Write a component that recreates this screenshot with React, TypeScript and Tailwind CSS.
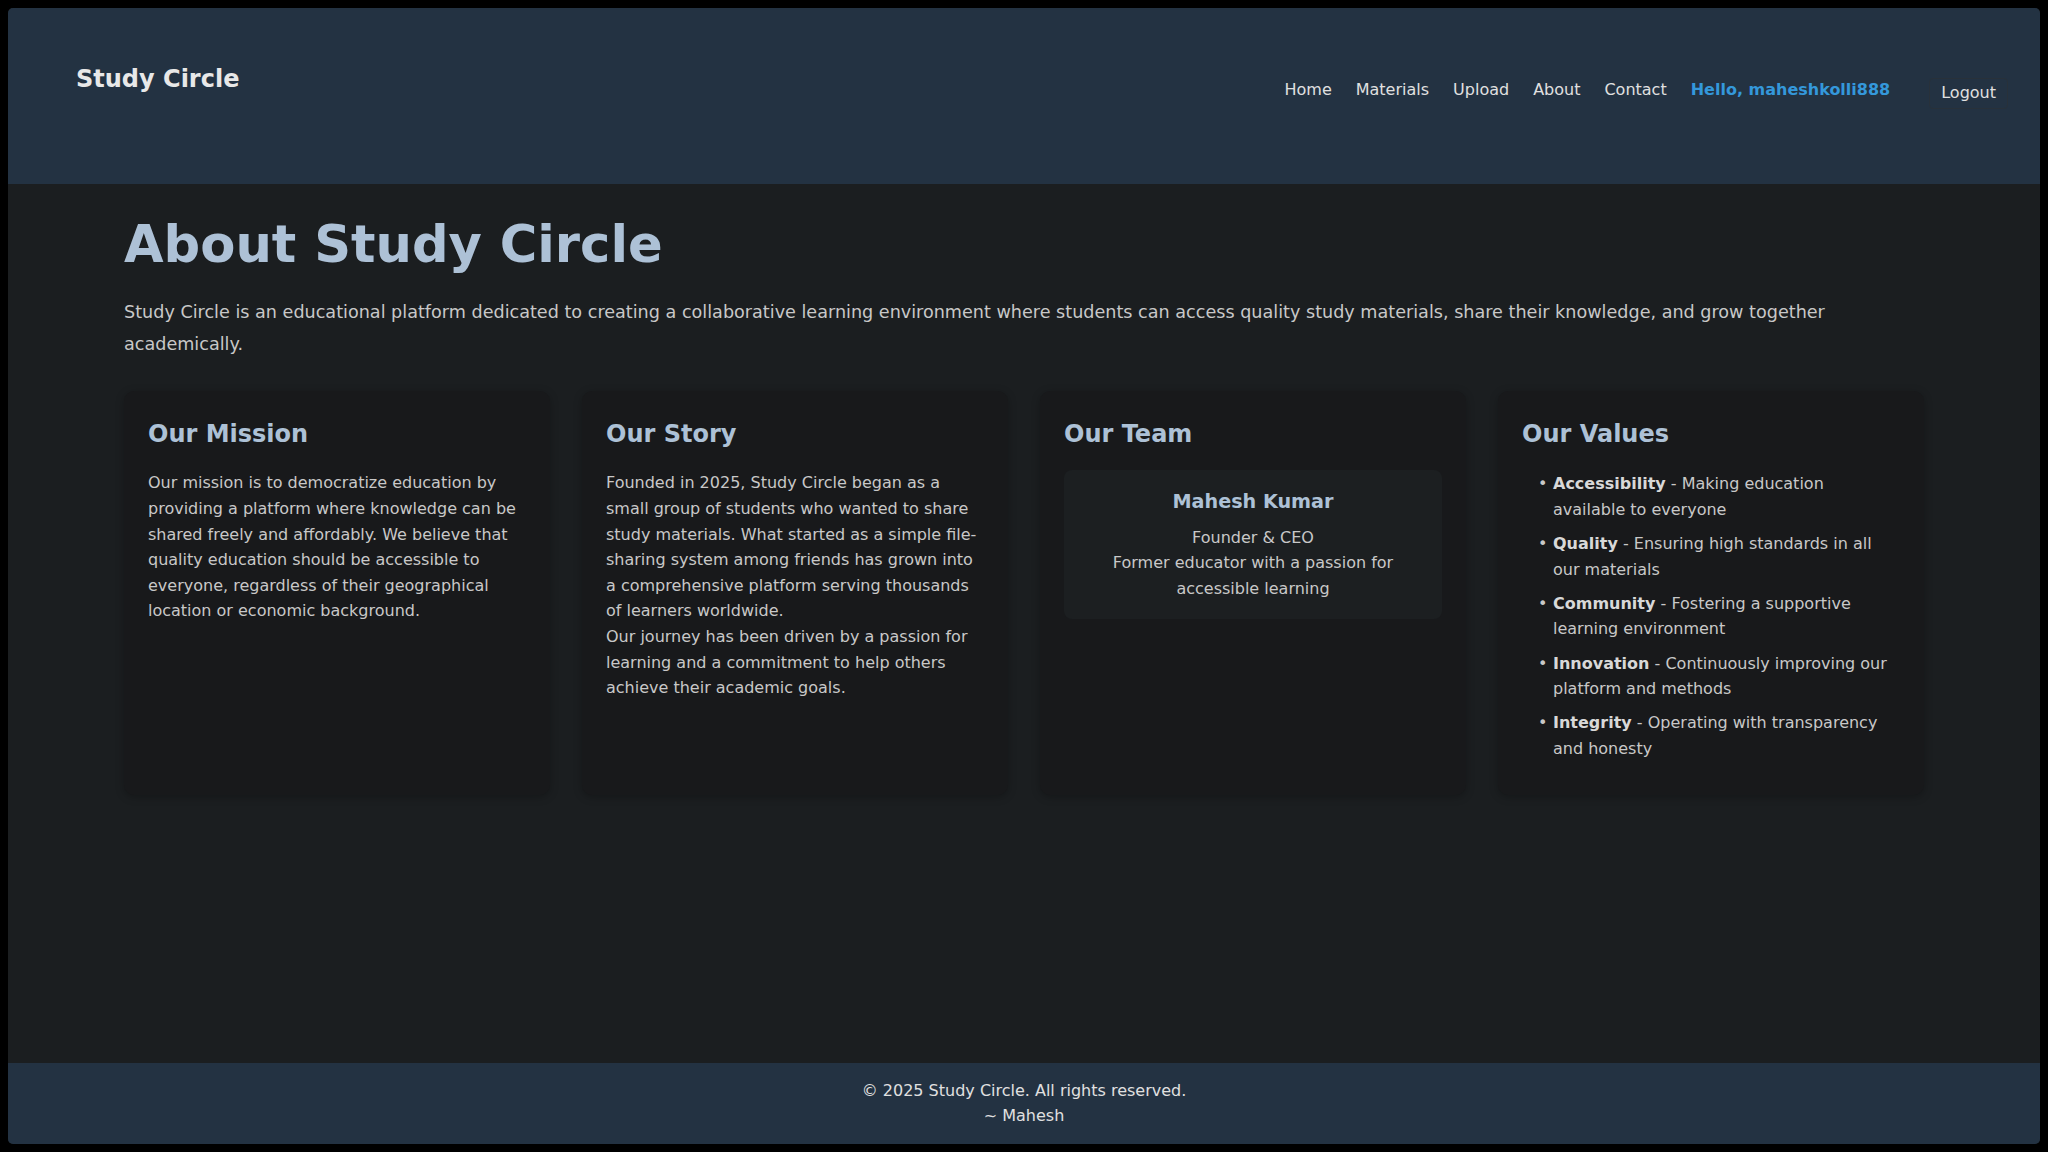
const navLinks = ["Home", "Materials", "Upload", "About", "Contact"]

const values = [
  { name: "Accessibility", text: "Making education available to everyone" },
  { name: "Quality", text: "Ensuring high standards in all our materials" },
  { name: "Community", text: "Fostering a supportive learning environment" },
  { name: "Innovation", text: "Continuously improving our platform and methods" },
  { name: "Integrity", text: "Operating with transparency and honesty" },
]

function Card({ title, children }: { title: string; children: React.ReactNode }) {
  return (
    <div className="bg-[#18191b] rounded-[10px] shadow-[0_2px_8px_rgba(0,0,0,0.25)] pt-[29px] px-6 pb-[25px]">
      <h3 className="text-2xl font-bold leading-[1.2] text-[#adc1d6] mb-[22px]">{title}</h3>
      {children}
    </div>
  )
}

export default function App() {
  return (
    <div className="w-full h-screen bg-black p-2 font-['DejaVu_Sans',sans-serif]">
      <div className="h-full flex flex-col rounded-[5px] overflow-hidden bg-[#1b1e20]">
        <header className="h-[176px] shrink-0 bg-[#233242] flex items-start justify-between pl-[68px] pr-[32px]">
          <h1 className="mt-[58px] text-2xl font-bold leading-[1.164] text-[#e8e8e8]">Study Circle</h1>
          <nav className="mt-[63px] flex items-center">
            <div className="flex items-center gap-[24px] text-base text-[#e0e0e0]">
              {navLinks.map((link) => (
                <a key={link} href="#" className="leading-[1.164]">
                  {link}
                </a>
              ))}
              <span className="font-bold text-[#3498db] leading-[1.164]">Hello, maheshkolli888</span>
            </div>
            <button className="ml-[39px] mt-[7px] px-[11px] py-[5px] border border-[#28313a] rounded-[4px] text-base leading-[1.164] text-[#e0e0e0]">
              Logout
            </button>
          </nav>
        </header>

        <main className="flex-1 pt-[31px]">
          <div className="max-w-[1800px] mx-auto">
            <h2 className="text-[3.2rem] font-bold leading-[1.164] text-[#adc1d6] mb-[21px]">About Study Circle</h2>
            <p className="text-[1.1rem] leading-[1.85] text-[#c8c8c8]">
              Study Circle is an educational platform dedicated to creating a collaborative learning environment where
              students can access quality study materials, share their knowledge, and grow together academically.
            </p>

            <div className="grid grid-cols-4 gap-[32px] mt-[30px]">
              <Card title="Our Mission">
                <p className="text-base leading-[1.6] text-[#c8c8c8]">
                  Our mission is to democratize education by providing a platform where knowledge can be shared freely
                  and affordably. We believe that quality education should be accessible to everyone, regardless of
                  their geographical location or economic background.
                </p>
              </Card>

              <Card title="Our Story">
                <p className="text-base leading-[1.6] text-[#c8c8c8]">
                  Founded in 2025, Study Circle began as a small group of students who wanted to share study materials.
                  What started as a simple file-sharing system among friends has grown into a comprehensive platform
                  serving thousands of learners worldwide.
                </p>
                <p className="text-base leading-[1.6] text-[#c8c8c8]">
                  Our journey has been driven by a passion for learning and a commitment to help others achieve their
                  academic goals.
                </p>
              </Card>

              <Card title="Our Team">
                <div className="bg-[#1c1f21] rounded-[8px] px-5 pt-[21px] pb-[17px] text-center">
                  <h4 className="text-[1.2rem] font-bold leading-[1.164] text-[#adc1d6] mb-[11px]">Mahesh Kumar</h4>
                  <p className="text-base leading-[1.6] text-[#c8c8c8]">Founder &amp; CEO</p>
                  <p className="text-base leading-[1.6] text-[#c8c8c8]">Former educator with a passion for accessible learning</p>
                </div>
              </Card>

              <Card title="Our Values">
                <ul className="pl-[31px] pt-px text-base leading-[1.6] text-[#c8c8c8]">
                  {values.map((v) => (
                    <li key={v.name} className="relative mb-[8.5px]">
                      <span className="absolute -left-[15px] top-0">•</span>
                      <strong className="font-bold text-[#d8d8d8]">{v.name}</strong> - {v.text}
                    </li>
                  ))}
                </ul>
              </Card>
            </div>
          </div>
        </main>

        <footer className="shrink-0 bg-[#233242] py-[15px] text-center text-base leading-[1.6] text-[#e0e0e0]">
          <p>© 2025 Study Circle. All rights reserved.</p>
          <p>~ Mahesh</p>
        </footer>
      </div>
    </div>
  )
}
